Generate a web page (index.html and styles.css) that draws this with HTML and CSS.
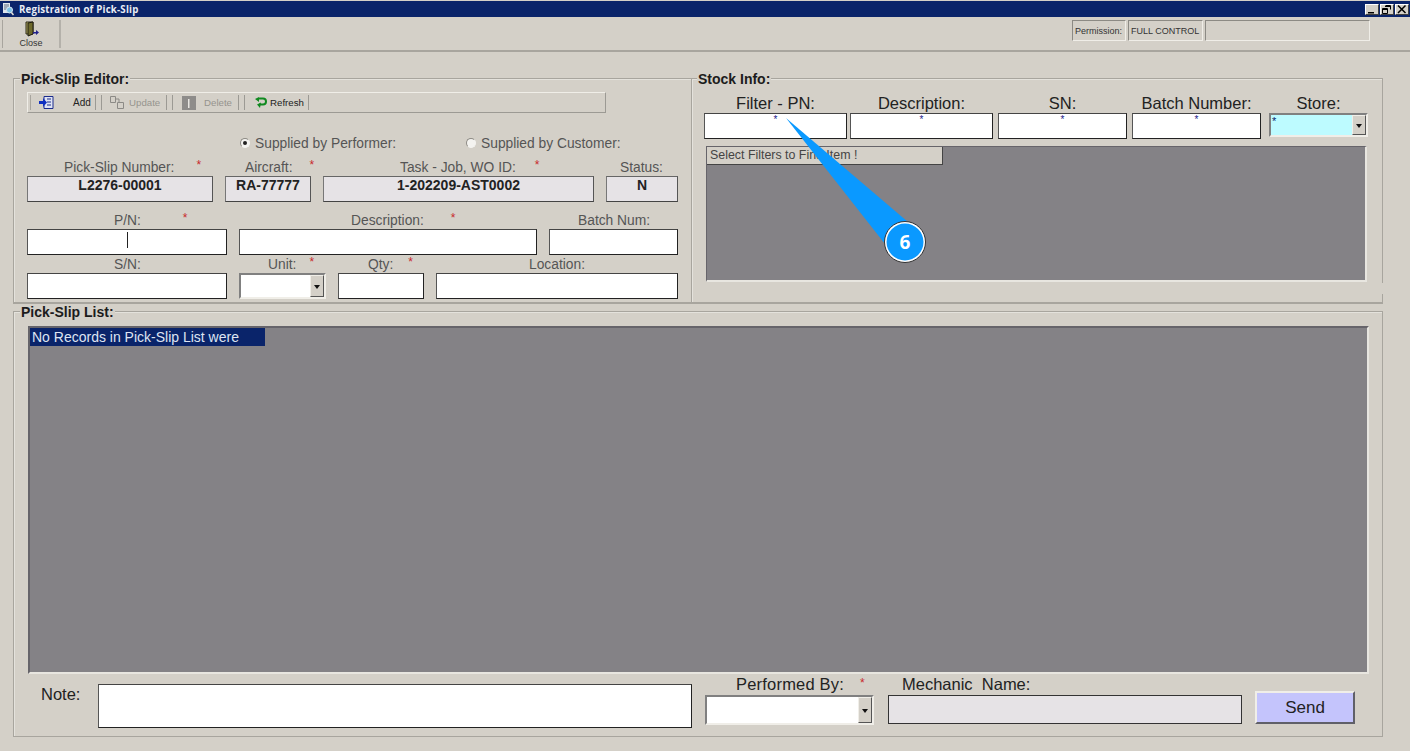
FILE: index.html
```html
<!DOCTYPE html>
<html lang="en">
<head>
<meta charset="utf-8">
<title>Registration of Pick-Slip</title>
<link rel="stylesheet" href="styles.css">
</head>
<body>
<div class="window">
  <header class="titlebar">
    <svg class="title-icon" width="12" height="14" viewBox="0 0 12 14"><rect x="1" y="1" width="7" height="10" fill="#dfe6ee"/><path d="M2 3h5M2 5h5M2 7h3" stroke="#5a6a80"/><circle cx="7.5" cy="8" r="3" fill="#7fc4e8" stroke="#d8e8f4"/><path d="M9.500 10.500 11.500 13" stroke="#e8e4d8" stroke-width="1.500"/></svg>
    <span class="title-text">Registration of Pick-Slip</span>
    <div class="win-buttons">
      <span class="win-btn"><svg width="10" height="9" viewBox="0 0 10 9"><path d="M1 7h6v1.500H1z" fill="#000"/></svg></span>
      <span class="win-btn"><svg width="10" height="9" viewBox="0 0 10 9"><path d="M3.500.5h5v4M3 1.500h6M.5 3.500h5v5h-5zM.5 4.500h5" fill="none" stroke="#000"/></svg></span>
      <span class="win-btn"><svg width="10" height="9" viewBox="0 0 10 9"><path d="M1 .5 8.500 8M8.500.5 1 8" stroke="#000" stroke-width="1.500"/></svg></span>
    </div>
  </header>

  <div class="toolbar">
    <div class="close-tool">
      <svg width="15" height="16" viewBox="0 0 15 16"><path d="M2 1h7v12H2z" fill="#b4ac60" stroke="#2c2a18"/><path d="M4 2 9 1v12l-5 2z" fill="#6e6a2c" stroke="#1e1c10"/><path d="M9 11h3V9l3 2.500L12 14v-1.500H9z" fill="#23238c"/></svg>
      <span>Close</span>
    </div>
    <div class="perm">
      <span class="perm-cell perm-label">Permission:</span>
      <span class="perm-cell perm-value">FULL CONTROL</span>
      <span class="perm-cell perm-empty"></span>
    </div>
  </div>

  <main class="content">
    <div class="top-panels">
      <section class="panel editor">
        <h2 class="legend">Pick-Slip Editor:</h2>
        <div class="edit-tools">
          <span class="grip"></span>
          <span class="tool tool-add">
            <svg width="15" height="13" viewBox="0 0 15 13"><path d="M5 .5h9v12H5z" fill="#dfe4f4" stroke="#1c2c8c"/><path d="M8 3h4M8 6h4M8 9h4" stroke="#1c2c8c"/><path d="M0 5h4V2l4 4.500L4 11V8H0z" fill="#1030c0"/></svg>
            <span class="tool-text add-text">Add</span>
          </span>
          <span class="sep"></span>
          <span class="tool tool-update off">
            <svg width="14" height="13" viewBox="0 0 14 13"><path d="M.5.5h5v6h-5zM7.500 6.500h6v6h-6z" fill="#d4d0c8" stroke="#8c8a86"/><path d="M6 3h3v3" fill="none" stroke="#8c8a86"/></svg>
            <span class="tool-text">Update</span>
          </span>
          <span class="sep"></span>
          <span class="tool tool-delete off">
            <svg width="14" height="14" viewBox="0 0 14 14"><rect width="14" height="14" fill="#8e8c8a"/><path d="M6 3h1.500v9H6z" fill="#e8e6e2"/></svg>
            <span class="tool-text">Delete</span>
          </span>
          <span class="sep"></span>
          <span class="tool tool-refresh">
            <svg width="13" height="12" viewBox="0 0 13 12"><path d="M5 1.500h4a3 3 0 0 1 0 6H5" fill="none" stroke="#108a20" stroke-width="2"/><path d="M5 0 1 2l4 3zM7 5.500 3 7.500l3 3.500z" fill="#108a20"/></svg>
            <span class="tool-text">Refresh</span>
          </span>
          <span class="sep sep-end"></span>
        </div>

        <div class="radios">
          <label class="radio radio-first"><span class="dot checked"></span>Supplied by Performer:</label>
          <label class="radio"><span class="dot"></span>Supplied by Customer:</label>
        </div>

        <div class="row row-1">
          <div class="field w-psn"><span class="lbl p-psn">Pick-Slip Number:<i class="star s-psn">*</i></span><div class="box ro">L2276-00001</div></div>
          <div class="field w-air"><span class="lbl p-air">Aircraft:<i class="star s-air">*</i></span><div class="box ro">RA-77777</div></div>
          <div class="field w-task"><span class="lbl p-task">Task - Job, WO ID:<i class="star s-task">*</i></span><div class="box ro">1-202209-AST0002</div></div>
          <div class="field w-stat"><span class="lbl p-stat">Status:</span><div class="box ro">N</div></div>
        </div>

        <div class="row row-2">
          <div class="field w-pn"><span class="lbl p-pn">P/N:<i class="star s-pn">*</i></span><div class="box"><span class="caret"></span></div></div>
          <div class="field w-desc"><span class="lbl p-desc">Description:<i class="star s-desc">*</i></span><div class="box"></div></div>
          <div class="field w-batch"><span class="lbl p-batch">Batch Num:</span><div class="box"></div></div>
        </div>

        <div class="row row-3">
          <div class="field w-pn"><span class="lbl p-sn">S/N:</span><div class="box"></div></div>
          <div class="field w-unit"><span class="lbl p-unit">Unit:<i class="star s-unit">*</i></span><div class="combo combo-unit"><span class="combo-text"></span><span class="combo-btn"></span></div></div>
          <div class="field w-qty"><span class="lbl p-qty">Qty:<i class="star s-qty">*</i></span><div class="box"></div></div>
          <div class="field w-loc"><span class="lbl p-loc">Location:</span><div class="box"></div></div>
        </div>
      </section>

      <section class="panel stock">
        <h2 class="legend">Stock Info:</h2>
        <div class="filters">
          <div class="filter w-f1"><span class="filter-lbl">Filter - PN:</span><div class="box filter-box">*</div></div>
          <div class="filter w-f2"><span class="filter-lbl">Description:</span><div class="box filter-box">*</div></div>
          <div class="filter w-f3"><span class="filter-lbl">SN:</span><div class="box filter-box">*</div></div>
          <div class="filter w-f4"><span class="filter-lbl">Batch Number:</span><div class="box filter-box">*</div></div>
          <div class="filter w-f5"><span class="filter-lbl">Store:</span><div class="combo combo-store"><span class="combo-text">*</span><span class="combo-btn"></span></div></div>
        </div>
        <div class="grid-area stock-grid"><div class="grid-head">Select Filters to Find Item !</div></div>
      </section>
    </div>

    <section class="panel list">
      <h2 class="legend">Pick-Slip List:</h2>
      <div class="grid-area list-grid"><div class="grid-selected">No Records in Pick-Slip List were</div></div>
      <div class="footer">
        <span class="note-lbl">Note:</span>
        <div class="box note-box"></div>
        <div class="stack w-perf">
          <span class="foot-lbl perf-lbl">Performed By:<i class="star s-perf">*</i></span>
          <div class="combo combo-perf"><span class="combo-text"></span><span class="combo-btn"></span></div>
        </div>
        <div class="stack w-mech">
          <span class="foot-lbl mech-lbl">Mechanic&nbsp; Name:</span>
          <div class="box ro mech-box"></div>
        </div>
        <button class="send" type="button">Send</button>
      </div>
    </section>
  </main>

  <svg class="callout" width="150" height="155" viewBox="780 112 150 155">
    <path d="M786 118 908 222 885 244z" fill="#0a99ff"/>
    <circle cx="905" cy="242" r="20.500" fill="#fff" stroke="#333" stroke-width="1"/>
    <circle cx="905" cy="242" r="18.500" fill="#0a99ff"/>
    <text x="905" y="249" class="callout-num">6</text>
  </svg>
</div>
</body>
</html>
```
FILE: styles.css
```css
* { box-sizing: border-box; }
html, body { margin: 0; padding: 0; }
body { background: #d4d0c8; font-family: "Liberation Sans", Arial, sans-serif; color: #444; overflow: hidden; }
.window { position: relative; width: 1410px; height: 751px; overflow: hidden; background: #d4d0c8; }

/* title bar */
.titlebar { display: flex; align-items: center; height: 16px; margin-top: 1px; background: #0a246a; padding-left: 2px; }
.title-icon { flex: none; }
.title-text { margin-left: 5px; color: #e8ecf4; font: bold 9.700px "Open Sans", sans-serif; letter-spacing: .02em; }
.win-buttons { display: flex; margin-left: auto; margin-right: 1px; gap: 1px; }
.win-btn { display: flex; align-items: center; justify-content: center; width: 14px; height: 11px; background: #d4d0c8; border: 1px solid; border-color: #fff #404040 #404040 #fff; }

/* main toolbar */
.toolbar { display: flex; height: 35px; border-bottom: 2px solid #a8a59e; padding-left: 2px; align-items: stretch; }
.close-tool { display: flex; flex-direction: column; align-items: center; width: 59px; margin-top: 3px; margin-bottom: 2px; padding-top: 1px; border-left: 1px solid #a8a59e; border-right: 2px solid #b4b1aa; font-size: 9px; color: #333; gap: 1px; }
.perm { display: flex; margin-left: auto; margin-right: 40px; margin-top: 3px; gap: 2px; height: 21px; }
.perm-cell { display: flex; align-items: center; border: 1px solid; border-color: #8c8a84 #f0eee8 #f0eee8 #8c8a84; font-size: 9px; color: #333; padding-left: 2px; }
.perm-label { width: 54px; }
.perm-value { width: 75px; }
.perm-empty { width: 165px; }

/* layout */
.content { padding: 26px 28px 0 13px; }
.top-panels { display: grid; grid-template-columns: 678px 692px; height: 226px; }
.panel { position: relative; border: 1px solid #a8a59e; box-shadow: inset 1px 1px 0 #e4e2dc; }
.legend { position: absolute; top: -7px; margin: 0; padding: 0 1px; background: #d4d0c8; font-size: 14px; line-height: 14px; font-weight: bold; color: #1c1c1c; }
.editor .legend, .list .legend { left: 6px; }
.stock .legend { left: 5px; }

/* editor */
.editor { padding: 13px 0 0 13px; border-right: 0; border-bottom-width: 2px; }
.edit-tools { display: flex; align-items: center; width: 579px; height: 21px; border: 1px solid; border-color: #f0eee8 #9c9a94 #9c9a94 #f0eee8; font: 9.700px "Liberation Sans", sans-serif; color: #222; }
.grip { width: 1px; height: 15px; margin-left: 2px; background: #a8a59e; }
.tool { display: flex; align-items: center; height: 100%; }
.tool-add { width: 64px; padding-left: 8px; }
.add-text { margin-left: 19px; font-size: 10px; }
.tool-update { width: 64px; padding-left: 8px; }
.tool-delete { width: 65px; padding-left: 9px; }
.tool-refresh { width: 64px; padding-left: 9px; }
.tool-update .tool-text { margin-left: 5px; }
.tool-delete .tool-text { margin-left: 8px; }
.tool-refresh .tool-text { margin-left: 3px; }
.off { color: #96948e; }
.sep { flex: none; width: 7px; height: 15px; border-left: 1px solid #9c9a94; border-right: 1px solid #9c9a94; }
.sep-end { width: 1px; border-right: 0; margin-left: -1px; }

.radios { display: flex; height: 16px; margin-top: 22px; padding-left: 213px; }
.radio { display: flex; align-items: center; font-size: 13.800px; color: #555; }
.radio-first { width: 226px; }
.dot { position: relative; display: block; width: 10px; height: 10px; margin-right: 5px; border-radius: 50%; background: #f4f3f0; border: 1px solid; border-color: #8c8a84 #f4f3f0 #f4f3f0 #8c8a84; }
.checked::after { content: ""; position: absolute; left: 2px; top: 2px; width: 4px; height: 4px; border-radius: 50%; background: #222; }

.row { display: flex; }
.row-1 { gap: 12px; margin-top: 8px; }
.row-2, .row-3 { gap: 12px; }
.row-2 { margin-top: 10px; }
.row-3 { margin-top: 1px; }
.field { display: flex; flex-direction: column; }
.lbl { display: block; height: 17px; font-size: 13.800px; line-height: 17px; white-space: nowrap; color: #555; }
.star { display: inline-block; font-style: normal; color: #c8282c; font-size: 12px; line-height: 12px; vertical-align: 3px; }
.box { height: 26px; background: #fff; border: 1px solid #222; border-top-color: #444; border-left-color: #555; text-align: center; font-size: 14px; }
.ro { background: #e6e3e6; border-color: #666 #555 #444 #777; font-weight: bold; color: #222; line-height: 17px; }
.caret { display: block; width: 1px; height: 16px; margin: 2px 0 0 99px; background: #222; }

.w-psn { width: 186px; } .w-air { width: 86px; } .w-task { width: 271px; } .w-stat { width: 72px; }
.w-pn { width: 200px; } .w-desc { width: 298px; } .w-batch { width: 129px; }
.w-unit { width: 87px; } .w-qty { width: 86px; } .w-loc { width: 242px; }
.p-psn { padding-left: 37px; } .s-psn { margin-left: 22px; }
.p-air { padding-left: 20px; } .s-air { margin-left: 17px; }
.p-task { padding-left: 77px; } .s-task { margin-left: 19px; }
.p-stat { padding-left: 14px; }
.p-pn { padding-left: 87px; } .s-pn { margin-left: 42px; }
.p-desc { padding-left: 112px; } .s-desc { margin-left: 27px; }
.p-batch { padding-left: 29px; }
.p-sn { padding-left: 87px; }
.p-unit { padding-left: 29px; } .s-unit { margin-left: 13px; }
.p-qty { padding-left: 30px; } .s-qty { margin-left: 15px; }
.p-loc { padding-left: 93px; }

/* combo */
.combo { display: flex; height: 26px; background: #fff; border: 2px solid; border-color: #808080 #f0eee8 #f0eee8 #808080; }
.combo-text { flex: 1; font-size: 11px; line-height: 12px; color: #0a246a; padding-left: 1px; }
.combo-btn { position: relative; flex: none; width: 14px; background: #d4d0c8; border: 1px solid; border-color: #f0eee8 #555 #555 #f0eee8; }
.combo-btn::after { content: ""; position: absolute; left: 3px; top: 50%; margin-top: -1px; border: 3.500px solid transparent; border-top: 4px solid #111; border-bottom: 0; }

/* stock */
.stock { padding: 14px 0 0 12px; border-bottom-width: 2px; }
.stock::after { content: ""; position: absolute; right: -1px; top: 204px; width: 1px; height: 11px; background: #d4d0c8; }
.filters { display: flex; height: 53px; }
.filter { display: flex; flex-direction: column; }
.filter-lbl { height: 20px; font-size: 16.500px; line-height: 20px; text-align: center; color: #222; white-space: nowrap; }
.filter-box { font-size: 10px; line-height: 11px; color: #1c1c8c; }
.w-f1 { width: 143px; margin-right: 3px; }
.w-f2 { width: 143px; margin-right: 5px; }
.w-f3 { width: 129px; margin-right: 5px; }
.w-f4 { width: 129px; margin-right: 8px; }
.w-f5 { width: 99px; }
.combo-store { height: 24px; }
.combo-store .combo-text { background: #bdfbff; }

.grid-area { background: #848286; border: 2px solid; border-color: #66646a #e8e6e0 #e8e6e0 #66646a; }
.stock-grid { width: 661px; height: 136px; margin-left: 2px; border-left-width: 1px; border-top-width: 1px; }
.grid-head { width: 236px; height: 18px; padding-left: 3px; background: #d4d0c8; border-right: 1px solid #444; border-bottom: 1px solid #444; font-size: 12.400px; line-height: 17px; color: #444; }

/* list */
.list { width: 1370px; height: 426px; margin-top: 7px; padding: 14px 0 0 14px; }
.list-grid { width: 1341px; height: 348px; }
.grid-selected { width: 235px; height: 18px; padding-left: 2px; background: #0a246a; color: #dfe4f2; font-size: 14px; line-height: 18px; }

.footer { display: flex; align-items: flex-start; }
.note-lbl { width: 70px; margin-top: 11px; padding-left: 13px; font-size: 16.500px; line-height: 18px; color: #222; }
.note-box { width: 594px; height: 44px; margin-top: 10px; }
.stack { display: flex; flex-direction: column; }
.foot-lbl { height: 21px; font-size: 16.500px; line-height: 20px; color: #222; white-space: nowrap; }
.w-perf { width: 169px; margin-left: 13px; }
.w-mech { width: 354px; margin-left: 14px; }
.perf-lbl { padding-left: 31px; letter-spacing: .2px; }
.s-perf { margin-left: 16px; }
.mech-lbl { padding-left: 14px; }
.combo-perf { height: 30px; }
.mech-box { height: 29px; border-color: #333; }
.send { width: 100px; height: 33px; margin: 17px 0 0 13px; padding: 0; background: #c4c4fc; border: 2px solid; border-color: #f0eee8 #606068 #606068 #f0eee8; font: 17px "Liberation Sans", sans-serif; color: #222; }

/* callout annotation */
.callout { position: absolute; left: 780px; top: 112px; }
.callout-num { font: bold 19px "Open Sans", sans-serif; fill: #fff; text-anchor: middle; }
```
